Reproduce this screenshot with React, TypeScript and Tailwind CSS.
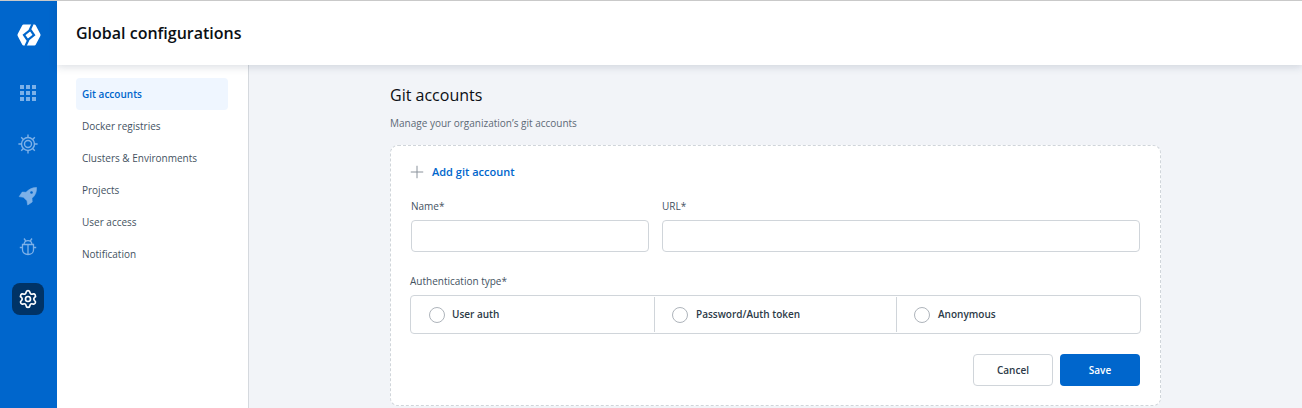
import { Settings, Plus } from "lucide-react";

const side = ["Docker registries", "Clusters & Environments", "Projects", "User access", "Notification"];

function Logo() {
  return (
    <svg width="24" height="22" viewBox="0 0 24 22">
      <path d="M6.500 .5h11q.8 0 1.200.7l4.600 8.800q.5 1 0 2l-4.600 8.800q-.4.7-1.200.7h-11q-.8 0-1.200-.7L.7 12q-.5-1 0-2L5.300 1.200q.4-.7 1.200-.7z" fill="#fff" />
      <path d="M15.500 0 12.500 6.500 7 11l3.500 5" stroke="#0066cc" strokeWidth="2.200" fill="none" />
      <path d="M8.500 22l3-6.500L17 11l-3.500-5" stroke="#0066cc" strokeWidth="2.200" fill="none" />
    </svg>
  );
}

function Grid() {
  return (
    <div className="grid grid-cols-3 gap-[2px] w-4 h-4 shrink-0">
      {Array.from({ length: 9 }).map((_, i) => (
        <span key={i} className="block w-1 h-1 bg-[#7db1e8]" />
      ))}
    </div>
  );
}

function Sun() {
  return (
    <svg width="20" height="20" viewBox="0 0 20 20" fill="none" stroke="#7db1e8" strokeWidth="1.400">
      <circle cx="10" cy="10" r="6.500" />
      <circle cx="10" cy="10" r="3.500" />
      <path d="M10 .4v3M10 16.600v3M.4 10h3M16.600 10h3M3.200 3.200l2.200 2.200M14.600 14.600l2.200 2.200M3.200 16.800l2.200-2.200M14.600 5.400l2.200-2.200" />
    </svg>
  );
}

function RocketIcon() {
  return (
    <svg width="20" height="20" viewBox="0 0 20 20">
      <path
        d="M18.500 1.500c.3 4.700-1.300 8-4.500 10.800l.2 3.700-4.500 3-.7-4.200L5.500 11.300l-4.300-.7 3-4.500 3.800.2c3-3 6-4.800 10.500-4.800z"
        fill="#7db1e8"
        stroke="#7db1e8"
        strokeWidth="0.600"
        strokeLinejoin="round"
      />
      <circle cx="13.500" cy="6.500" r="1.300" fill="#0066cc" />
    </svg>
  );
}

function BugIcon() {
  return (
    <svg width="20" height="20" viewBox="0 0 20 20" fill="none" stroke="#7db1e8" strokeWidth="1.300">
      <path d="M6 1.500l1.800 2.500M14 1.500l-1.800 2.500" />
      <path d="M6 7.500c.3-2.500 2-3.800 4-3.800s3.700 1.300 4 3.800" />
      <path d="M4.500 7.500h11v5.500c0 2.800-2.500 4.500-5.500 4.500S4.500 15.800 4.500 13z" />
      <path d="M10 7.500v10M1.800 10.500h2.700M15.500 10.500h2.700" />
    </svg>
  );
}

function Radio({ label, gap = "gap-[8px]" }: { label: string; gap?: string }) {
  return (
    <div className={"flex items-center " + gap}>
      <span className="w-4 h-4 rounded-full border border-[#aeb4bb] bg-white" />
      <span className="text-[10px] font-semibold text-[#2c3a47]">{label}</span>
    </div>
  );
}

export default function App() {
  return (
    <div className="h-[408px] w-[1302px] overflow-hidden flex flex-col bg-[#f2f4f8] border-t border-[#c9c9c9] font-['Open_Sans','Noto_Sans',sans-serif]">
      <div className="flex flex-1 min-h-0">
        <aside className="w-[57px] shrink-0 bg-[#0066cc] flex flex-col items-center">
          <div className="mt-[22px] h-6 flex items-center"><Logo /></div>
          <div className="mt-[30px] flex flex-col items-center -translate-x-px">
            <div className="h-8 w-8 flex items-center justify-center"><Grid /></div>
            <div className="mt-[19px] h-8 w-8 flex items-center justify-center"><Sun /></div>
            <div className="mt-[20px] h-8 w-8 flex items-center justify-center"><RocketIcon /></div>
            <div className="mt-[19px] h-8 w-8 flex items-center justify-center"><BugIcon /></div>
            <div className="mt-[20px] h-8 w-8 flex items-center justify-center rounded-lg bg-[#003366]">
              <Settings size={20} className="text-white" />
            </div>
          </div>
        </aside>
        <div className="flex-1 flex flex-col min-w-0">
          <header className="relative z-10 h-[64px] shrink-0 bg-white flex items-center pl-[19px] shadow-[0_2px_8px_rgba(30,50,80,0.16)]">
            <h1 className="text-[16px] font-semibold text-[#0b0f14]">Global configurations</h1>
          </header>
          <div className="flex flex-1 min-h-0">
            <nav className="w-[192px] shrink-0 bg-white border-r border-[#d5d9de] pt-[13px] pl-[19px] pr-5 text-[10px] text-[#44525f]">
              <div className="h-8 rounded bg-[#eff6ff] flex items-center pl-[6px] pt-px font-semibold text-[#0066cc]">Git accounts</div>
              {side.map((s) => (
                <div key={s} className="h-8 flex items-center pl-[6px] pt-px">{s}</div>
              ))}
            </nav>
            <main className="flex-1 min-w-0 pl-[141px] pt-[18px]">
              <h2 className="text-[16px] leading-[24px] text-[#0b0f14]">Git accounts</h2>
              <p className="mt-[8px] text-[10px] leading-[16px] text-[#5d6976]">Manage your organization’s git accounts</p>
              <section className="mt-[14px] w-[771px] h-[261px] rounded-lg border border-dashed border-[#d0d5da] bg-white pl-5 pr-5 pt-[16px]">
                <div className="flex items-center h-5">
                  <Plus size={20} className="text-[#8a929b] -ml-[4px]" strokeWidth={1.200} />
                  <span className="ml-[5px] text-[11px] font-semibold text-[#0066cc]">Add git account</span>
                </div>
                <div className="mt-[16px] flex gap-[13px]">
                  <div className="w-[238px]">
                    <label className="block text-[10px] leading-[16px] text-[#44525f]">Name*</label>
                    <div className="mt-[6px] h-8 rounded border border-[#d0d5da]" />
                  </div>
                  <div className="w-[478px]">
                    <label className="block text-[10px] leading-[16px] text-[#44525f]">URL*</label>
                    <div className="mt-[6px] h-8 rounded border border-[#d0d5da]" />
                  </div>
                </div>
                <label className="block mt-[21px] text-[10px] leading-[16px] text-[#44525f] -ml-px">Authentication type*</label>
                <div className="mt-[6px] h-[39px] w-[731px] -ml-px rounded border border-[#d0d5da] flex py-px">
                  <div className="w-[244px] pl-[18px] flex items-center border-r border-[#d0d5da]"><Radio label="User auth" gap="gap-[7px]" /></div>
                  <div className="w-[242px] pl-[17px] flex items-center border-r border-[#d0d5da]"><Radio label="Password/Auth token" /></div>
                  <div className="flex-1 pl-[17px] flex items-center"><Radio label="Anonymous" /></div>
                </div>
                <div className="mt-[20px] flex justify-end gap-[7px] w-[729px]">
                  <button className="w-[80px] h-8 rounded border border-[#d0d5da] bg-white text-[10px] font-semibold text-[#2c3a47]">Cancel</button>
                  <button className="w-[80px] h-8 rounded bg-[#0066cc] text-[10px] font-semibold text-white">Save</button>
                </div>
              </section>
            </main>
          </div>
        </div>
      </div>
    </div>
  );
}
